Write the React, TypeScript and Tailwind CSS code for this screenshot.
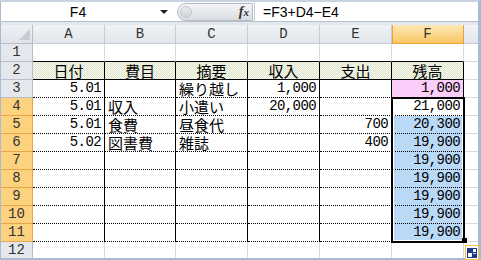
import React from 'react';

type Row = { n: number; cells: string[] };

const COLS = ['A', 'B', 'C', 'D', 'E', 'F'];
const WIDTHS = ['w-[72px]', 'w-[71px]', 'w-[72px]', 'w-[72px]', 'w-[72px]', 'w-[72px]'];

const ROWS: Row[] = [
  { n: 1, cells: ['', '', '', '', '', ''] },
  { n: 2, cells: ['日付', '費目', '摘要', '収入', '支出', '残高'] },
  { n: 3, cells: ['5.01', '', '繰り越し', '1,000', '', '1,000'] },
  { n: 4, cells: ['5.01', '収入', '小遣い', '20,000', '', '21,000'] },
  { n: 5, cells: ['5.01', '食費', '昼食代', '', '700', '20,300'] },
  { n: 6, cells: ['5.02', '図書費', '雑誌', '', '400', '19,900'] },
  { n: 7, cells: ['', '', '', '', '', '19,900'] },
  { n: 8, cells: ['', '', '', '', '', '19,900'] },
  { n: 9, cells: ['', '', '', '', '', '19,900'] },
  { n: 10, cells: ['', '', '', '', '', '19,900'] },
  { n: 11, cells: ['', '', '', '', '', '19,900'] },
  { n: 12, cells: ['', '', '', '', '', ''] },
];

const jp = "font-['Noto_Sans_CJK_JP',sans-serif] text-[15px]";
const num = "font-['Liberation_Mono','Noto_Sans_CJK_JP',monospace] text-[14px] tracking-[-0.6px]";
const hdr = "font-['Liberation_Mono',monospace] text-[14px] text-[#333]";

function cellBorder(n: number) {
  if (n === 1) return 'border-r border-r-[#d9dbde] border-b border-b-black';
  if (n === 2) return 'border-r border-b border-black';
  if (n <= 11) return 'border-r border-r-black border-b border-b-black [border-bottom-style:dotted]';
  return 'border-r border-b border-[#d9dbde]';
}

function cellBg(n: number, col: number) {
  if (n === 2)
    return 'bg-[#eff2e3] bg-[repeating-conic-gradient(#e1e7cf_0_25%,#f5f7ec_0_50%)] bg-[length:2px_2px]';
  if (col === 5 && n === 3) return 'bg-[#fbcdf9]';
  if (col === 5 && n >= 5 && n <= 11) return 'bg-[#b9d9f7]';
  return 'bg-white';
}

function cellText(n: number, col: number) {
  if (n === 2) return `${jp} text-center`;
  if (col === 1 || col === 2) return `${jp} text-left pl-[3px]`;
  return `${num} text-right pr-[3px]`;
}

const FormulaBar: React.FC = () => (
  <div className="flex h-[20px] border-b border-[#b7c1cc] bg-white font-['Liberation_Sans',sans-serif] text-[14px] text-black">
    <div className="flex w-[172px]">
      <div className="w-[154px] pt-[2px] text-center leading-[17px]">F4</div>
      <div className="flex flex-1 items-center justify-center">
        <svg width="8" height="4" viewBox="0 0 8 4">
          <polygon points="0,0 8,0 4,4" fill="#222" />
        </svg>
      </div>
    </div>
    <div className="ml-[4px] mt-[1px] flex h-[18px] w-[76px] items-center rounded-l-full border border-[#b3bac3] bg-gradient-to-b from-[#f4f5f7] to-[#d9dde2] pl-[2px]">
      <div className="h-[12px] w-[12px] rounded-full border border-[#c1c6cd] bg-gradient-to-b from-[#e9ecef] to-[#cfd4da]" />
      <div className="ml-auto mr-[3px] font-['Liberation_Serif',serif] text-[14px] font-bold italic leading-none text-[#333]">
        f<span className="text-[11px]">x</span>
      </div>
    </div>
    <div className="ml-[1px] w-px bg-[#c3c9d0]" />
    <div className="pl-[8px] pt-[2px] leading-[17px]">=F3+D4−E4</div>
  </div>
);

const HeaderRow: React.FC = () => (
  <div className="flex h-[19px]">
    <div className="relative w-[32px] border-r border-b border-[#b7c0ca] bg-gradient-to-b from-[#eef1f4] to-[#e0e4e9]">
      <svg className="absolute bottom-[3px] right-[2px]" width="11" height="11" viewBox="0 0 11 11">
        <polygon points="11,0 11,11 0,11" fill="#c7ccd2" />
      </svg>
    </div>
    {COLS.map((c, i) =>
      c === 'F' ? (
        <div
          key={c}
          className={`${WIDTHS[i]} border-r border-b border-[#ef9f3c] bg-gradient-to-b from-[#fde8b3] to-[#f8c762] text-center leading-[18px] shadow-[inset_1px_0_0_#ef9f3c] ${hdr}`}
        >
          {c}
        </div>
      ) : (
        <div
          key={c}
          className={`${WIDTHS[i]} border-r border-b border-[#c5cbd2] bg-gradient-to-b from-[#f1f3f5] to-[#e2e6ea] text-center leading-[18px] ${hdr}`}
        >
          {c}
        </div>
      ),
    )}
    <div className="w-[14px] border-b border-[#c5cbd2] bg-gradient-to-b from-[#f1f3f5] to-[#e2e6ea]" />
  </div>
);

const SheetRow: React.FC<{ row: Row }> = ({ row }) => {
  const selected = row.n >= 4 && row.n <= 11;
  return (
    <div className="flex h-[18px]">
      <div
        className={`w-[32px] border-r border-b text-center leading-[17px] ${hdr} ${
          selected ? 'border-[#e9a548] bg-[#fdd27e]' : 'border-[#b7c0ca] bg-[#e4e8ed]'
        }`}
      >
        {row.n}
      </div>
      {row.cells.map((v, i) => (
        <div
          key={i}
          className={`${WIDTHS[i]} overflow-visible whitespace-nowrap leading-[17px] text-black ${cellBorder(row.n)} ${cellBg(row.n, i)} ${cellText(row.n, i)}`}
        >
          {v}
        </div>
      ))}
      <div className="w-[14px] border-b border-[#d9dbde] bg-white" />
    </div>
  );
};

export default function App() {
  return (
    <div className="relative flex h-[260px] w-[481px] flex-col overflow-hidden bg-[#a7bbd3] pb-[2px] pl-px pr-[3px]">
      <div className="-mx-px h-[2px] bg-[#c9d3df]" />
      <FormulaBar />
      <div className="h-[3px] bg-[#e4e8ed]" />
      <div className="relative flex-1 overflow-hidden bg-white">
        <HeaderRow />
        {ROWS.map((r) => (
          <SheetRow key={r.n} row={r} />
        ))}
        {/* selection F4:F11 */}
        <div className="absolute left-[390px] top-[72px] h-[146px] w-[74px] border-2 border-black shadow-[inset_0_0_0_1px_white]" />
        <div className="absolute left-[461px] top-[213px] h-[5px] w-[5px] bg-black" />
      </div>
      {/* auto fill options button */}
      <div className="absolute left-[465px] top-[245px] flex h-[15px] w-[14px] items-center justify-center border border-[#f3c24a] bg-white">
        <svg width="10" height="10" viewBox="0 0 10 10">
          <rect x="0" y="0" width="10" height="10" fill="#1d3a8a" />
          <rect x="1" y="5" width="4" height="4" fill="white" />
          <rect x="6" y="1" width="3" height="3" fill="white" />
          <rect x="6" y="5" width="3" height="1" fill="#b9d9f7" />
        </svg>
      </div>
    </div>
  );
}
